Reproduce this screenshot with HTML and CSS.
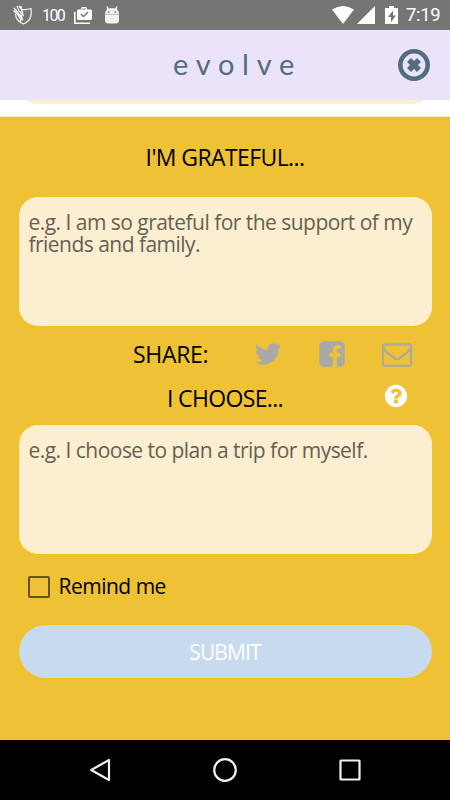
FILE: index.html
```html
<!DOCTYPE html>
<html lang="en">
<head>
    <meta charset="UTF-8">
    <meta name="viewport" content="width=device-width, initial-scale=1.0">
    <title>evolve</title>
    <link rel="stylesheet" href="styles.css">
</head>
<body>
    <div class="phone">
        <!-- Status bar -->
        <div class="status-bar">
            <svg class="shield" width="20" height="20" viewBox="0 0 20 20" fill="none" stroke="#f2f2f2">
                <path d="M9 4.5Q14 5 18 3.5Q19 12 15.5 15.5Q13 18 10.5 19Q5 17 3 12L2.5 9" stroke-width="1.2"/>
                <path d="M1 3L5 8L9 12L8 15L5 10L1 6L4 5M4 1L6 6L10 10L9 5L6 1M8 1L9 7M5 8L10 15M9 10L7 17" stroke-width="1.3"/>
            </svg>
            <span class="battery-percent">100</span>
            <svg class="work" width="18" height="17" viewBox="0 0 18 17">
                <path fill="#fff" fill-rule="evenodd" d="M4 2.5h3V1.3L8 0h4l1 1.3v1.2h4l1 1V12l-1 1H4l-1-1V3.500zM8.300 1.500v1h3.400v-1zM6.500 7.500l3 3 5-5-1-1-4 4-2-2z"/>
                <path fill="none" stroke="#fff" stroke-width="1.600" d="M.8 5v11.200H16"/>
            </svg>
            <svg class="droid" width="16" height="18" viewBox="0 0 16 18">
                <path fill="#f2f2f2" d="M1 9Q1 5 3 3.500L2.500 .5 3.300 0l1.700 2.500q3-.9 6 0L12.700 0l.8.500L13 3.500q2 1.500 2 5.500v6.500L13 17.500H3L1 15.500z"/>
                <path stroke="#c4c4c4" d="M1 8.500h14"/>
                <path stroke="#777" stroke-width="1.300" d="M4 6h1.500M10.500 6H12"/>
            </svg>
            <svg class="wifi" width="22" height="18" viewBox="0 0 22 18">
                <path fill="#fff" d="M0 3.500Q11-3.500 22 3.500L11 18z"/>
            </svg>
            <svg class="signal" width="18" height="18" viewBox="0 0 18 18">
                <path fill="#fff" d="M18 0v18H0z"/>
            </svg>
            <svg class="battery" width="13" height="18" viewBox="0 0 13 18">
                <path fill="#fff" fill-rule="evenodd" d="M0 2h4V0h5v2h4v16H0zM8 4.500L3 11h3v5l5-6.500H8z"/>
            </svg>
            <span class="clock">7:19</span>
        </div>

        <!-- Header -->
        <header class="header">
            <h1 class="logo">evolve</h1>
            <svg class="close" width="32" height="32" viewBox="0 0 32 32">
                <circle cx="16" cy="16" r="13.700" fill="none" stroke="#546c80" stroke-width="4.600"/>
                <path d="M11 11l10 10M21 11L11 21" stroke="#546c80" stroke-width="5.600"/>
            </svg>
        </header>

        <!-- End of the previous card -->
        <div class="previous">
            <div class="previous-field"></div>
        </div>

        <!-- Form -->
        <main class="form">
            <h2 class="title grateful">I'M GRATEFUL...</h2>
            <div class="field">
                <span class="line">e.g. I am so grateful for the support of my</span>
                <span class="line">friends and family.</span>
            </div>

            <div class="share">
                <span class="share-label">SHARE:</span>
                <svg class="twitter" width="30" height="30" viewBox="0 0 1792 1792"><path d="M1684 408q-67 98-162 167 1 14 1 42 0 130-38 259.500t-115.500 248.500-184.500 210.500-258 146-323 54.500q-271 0-496-145 35 4 78 4 225 0 401-138-105-2-188-64.500t-114-159.500q33 5 61 5 43 0 85-11-112-23-185.500-111.500t-73.500-205.500v-4q68 38 146 41-66-44-105-115t-39-154q0-88 44-163 121 149 294.500 238.500t371.500 99.500q-8-38-8-74 0-134 94.500-228.500t228.500-94.500q140 0 236 102 109-21 205-78-37 115-142 178 93-10 186-50z"/></svg>
                <svg class="facebook" width="30" height="30" viewBox="0 0 1792 1792"><path d="M1376 128q119 0 203.500 84.500t84.500 203.500v960q0 119-84.500 203.500t-203.500 84.500h-188v-595h199l30-232h-229v-148q0-56 23.500-84t91.500-28l122-1v-207q-63-9-178-9-136 0-217.500 80t-81.500 226v171h-200v232h200v595h-532q-119 0-203.500-84.500t-84.500-203.500v-960q0-119 84.500-203.500t203.500-84.500h960z"/></svg>
                <svg class="mail" width="30" height="30" viewBox="0 0 1792 1792"><path d="M1664 1504v-768q-32 36-69 66-268 206-426 338-51 43-83 67t-86.500 48.500-102.500 24.500h-2q-48 0-102.500-24.500t-86.500-48.500-83-67q-158-132-426-338-37-30-69-66v768q0 13 9.500 22.500t22.500 9.500h1472q13 0 22.500-9.500t9.500-22.500zm0-1051v-24.500l-.5-13-3-12.500-5.500-9-9-7.500-14-2.500h-1472q-13 0-22.500 9.500t-9.500 22.500q0 168 147 284 193 152 401 317 6 5 35 29.500t46 37.500 44.500 31.500 50.500 27.500 43 9h2q20 0 43-9t50.500-27.500 44.500-31.500 46-37.500 35-29.500q208-165 401-317 54-43 100.500-115.500t46.500-131.500zm128-37v1088q0 66-47 113t-113 47h-1472q-66 0-113-47t-47-113v-1088q0-66 47-113t113-47h1472q66 0 113 47t47 113z"/></svg>
            </div>

            <div class="choose-row">
                <h2 class="title choose">I CHOOSE...</h2>
                <svg class="help" width="26" height="26" viewBox="0 0 1792 1792"><path d="M1024 1376v-192q0-14-9-23t-23-9h-192q-14 0-23 9t-9 23v192q0 14 9 23t23 9h192q14 0 23-9t9-23zm256-672q0-88-55.500-163t-138.500-116-170-41q-243 0-371 213-15 24 8 42l132 100q7 6 19 6 16 0 25-12 53-68 86-92 34-24 86-24 48 0 85.500 26t37.500 59q0 38-20 61t-68 45q-63 28-115.500 86.500t-52.500 125.500v36q0 14 9 23t23 9h192q14 0 23-9t9-23q0-19 21.500-49.500t54.500-49.500q32-18 49-28.500t46-35 44.500-48 28-60.500 12.500-81zm384 192q0 209-103 385.500t-279.500 279.500-385.500 103-385.500-103-279.500-279.500-103-385.500 103-385.500 279.500-279.500 385.500-103 385.500 103 279.500 279.500 103 385.500z"/></svg>
            </div>
            <div class="field">
                <span class="line">e.g. I choose to plan a trip for myself.</span>
            </div>

            <label class="remind">
                <span class="checkbox"></span>
                <span class="remind-label">Remind me</span>
            </label>

            <button class="submit">SUBMIT</button>
        </main>

        <!-- Android navigation -->
        <nav class="nav-bar">
            <svg width="30" height="30" viewBox="0 0 30 30"><path d="M6.200 15L24 5v20z"/></svg>
            <svg width="30" height="30" viewBox="0 0 30 30"><circle cx="15" cy="15" r="10.800"/></svg>
            <svg width="30" height="30" viewBox="0 0 30 30"><rect x="5.500" y="5.500" width="19" height="19" rx=".5"/></svg>
        </nav>
    </div>
</body>
</html>
```

FILE: styles.css
```css
* {
    box-sizing: border-box;
}
body {
    margin: 0;
    font-family: "Open Sans", "Noto Sans", sans-serif;
    background-color: #000;
}
.phone {
    width: 450px;
    height: 800px;
    display: flex;
    flex-direction: column;
    overflow: hidden;
}
svg {
    display: block;
    flex: none;
}
.status-bar {
    height: 30px;
    padding: 0 11px 0 13px;
    display: flex;
    align-items: center;
    background-color: #757575;
    color: #fff;
    font-family: Roboto, sans-serif;
}
.battery-percent {
    width: 21px;
    margin-left: 9px;
    font-size: 16px;
    letter-spacing: -1.6px;
}
.work {
    margin-left: 11px;
}
.droid {
    margin-left: 12px;
}
.wifi {
    margin-left: auto;
}
.signal {
    margin-left: 3px;
}
.battery {
    margin-left: 10px;
}
.clock {
    margin-left: 8px;
    font-size: 18.5px;
    letter-spacing: -0.3px;
    line-height: 30px;
    width: 33px;
    white-space: nowrap;
}
.header {
    height: 70px;
    padding: 0 20px 0 173px;
    display: flex;
    align-items: center;
    justify-content: space-between;
    background-color: #ebe3fa;
}
.logo {
    margin: 0;
    padding-bottom: 3px;
    font-family: Lato, sans-serif;
    font-size: 29px;
    font-weight: 400;
    letter-spacing: 7.7px;
    color: #546c80;
}
.previous {
    height: 17px;
    padding: 0 19px;
    background-color: #fff;
    border-bottom: 1px solid #f3e9c9;
    overflow: hidden;
}
.previous-field {
    height: 40px;
    margin-top: -36px;
    border-radius: 0 0 19px 19px;
    background-color: #fcefd1;
}
.form {
    height: 623px;
    padding: 0 18.5px;
    background-color: #efc235;
    color: #000;
}
.title {
    margin: 0;
    font-size: 23px;
    font-weight: 400;
    text-align: center;
    white-space: nowrap;
}
.grateful {
    height: 80px;
    line-height: 80px;
    letter-spacing: -0.6px;
}
.field {
    height: 129px;
    padding: 14px 0 0 10px;
    border-radius: 19px;
    background-color: #fcefd1;
    box-shadow: 0 0 0 1px #f3c11c;
    color: #656151;
    font-size: 21px;
    line-height: 22px;
    white-space: nowrap;
}
.line {
    display: block;
    letter-spacing: -0.53px;
}
.share {
    height: 57px;
    display: flex;
    align-items: center;
    padding: 0 0 2px 114.5px;
    fill: #a9a9a9;
}
.share-label {
    width: 119.5px;
    font-size: 23px;
    line-height: 30px;
    letter-spacing: -0.3px;
}
.facebook {
    margin-left: 34px;
}
.mail {
    margin-left: 35.5px;
}
.choose-row {
    height: 42px;
    display: grid;
    grid-template-columns: 364px 26px;
    align-items: start;
}
.choose {
    padding-left: 49px;
    line-height: 30px;
    letter-spacing: -0.65px;
}
.help {
    margin-top: -0.5px;
    fill: #fff;
}
.remind {
    height: 71px;
    padding-left: 9px;
    display: flex;
    align-items: center;
}
.checkbox {
    width: 22px;
    height: 22px;
    margin-top: -6px;
    border: 2px solid #66511a;
    border-radius: 2px;
}
.remind-label {
    margin: -7px 0 0 9px;
    font-size: 21px;
    letter-spacing: -0.5px;
}
.submit {
    display: block;
    width: 100%;
    height: 53px;
    padding: 0;
    border: none;
    border-radius: 27px;
    background-color: #c8daee;
    box-shadow: 0 0 0 1px #f3c11c;
    color: #fff;
    font: 21px "Open Sans", sans-serif;
    letter-spacing: -0.9px;
}
.nav-bar {
    height: 60px;
    padding: 0 85px;
    display: flex;
    align-items: center;
    justify-content: space-between;
    background-color: #000;
    fill: none;
    stroke: #f0f0f0;
    stroke-width: 2.2;
    stroke-linejoin: round;
}
```
